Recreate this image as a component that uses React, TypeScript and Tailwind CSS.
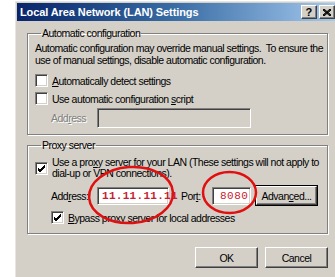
import React from "react";

const font = { fontFamily: '"Liberation Sans", Arial, sans-serif' };

function U({ children }: { children: React.ReactNode }) {
  return <span className="underline underline-offset-1">{children}</span>;
}

function CheckBox({ checked }: { checked?: boolean }) {
  return (
    <div className="w-[13px] h-[13px] shrink-0 bg-white border border-t-[#808080] border-l-[#808080] border-b-white border-r-white shadow-[inset_1px_1px_0_#404040,inset_-1px_-1px_0_#d4d0c8] flex items-center justify-center">
      {checked && (
        <svg width="9" height="9" viewBox="0 0 9 9">
          <path d="M1 4 L3 6 L8 1 M1 5 L3 7 L8 2 M1 6 L3 8 L8 3" stroke="#000" strokeWidth="1" fill="none" />
        </svg>
      )}
    </div>
  );
}

function Sunken({ className, children }: { className: string; children?: React.ReactNode }) {
  return (
    <div
      className={
        "border border-t-[#808080] border-l-[#808080] border-b-white border-r-white shadow-[inset_1px_1px_0_#404040,inset_-1px_-1px_0_#d4d0c8] flex items-center " +
        className
      }
    >
      {children}
    </div>
  );
}

function Button({ className, children }: { className: string; children: React.ReactNode }) {
  return (
    <div
      className={
        "bg-[#d4d0c8] border border-t-white border-l-white border-b-[#404040] border-r-[#404040] shadow-[inset_-1px_-1px_0_#808080] flex items-center justify-center text-black " +
        className
      }
    >
      {children}
    </div>
  );
}

function Group({ title, className, children }: { title: string; className: string; children: React.ReactNode }) {
  return (
    <fieldset
      className={
        "border border-[#808080] shadow-[1px_1px_0_#fff,inset_1px_1px_0_#fff] mx-0 px-0 overflow-hidden " + className
      }
    >
      <legend className="ml-[6px] px-[1px] leading-[12px] text-black">{title}</legend>
      {children}
    </fieldset>
  );
}

export default function App() {
  return (
    <div className="relative w-[335px] h-[277px] bg-white flex overflow-hidden" style={font}>
      <div className="ml-[15px] mt-[1px] flex-1 flex flex-col bg-[#d4d0c8] border-l border-t border-l-[#e8e6e0] border-t-[#e8e6e0]">
        {/* title bar */}
        <div className="mx-[1px] mt-[1px] h-[18px] bg-gradient-to-r from-[#0a246a] via-[#3a6ea5] to-[#a6caf0] flex items-center pl-[3px] pr-[2px]">
          <span className="text-white font-bold text-[11px] tracking-[-0.1px]">Local Area Network (LAN) Settings</span>
          <div className="ml-auto flex">
            <Button className="w-[16px] h-[14px] font-bold text-[11px]">?</Button>
            <Button className="ml-[2px] w-[16px] h-[14px]">
              <svg width="8" height="7" viewBox="0 0 8 7">
                <path d="M0 0 L8 7 M1 0 L8 6 M0 1 L7 7 M8 0 L0 7 M7 0 L0 6 M8 1 L1 7" stroke="#000" strokeWidth="1" />
              </svg>
            </Button>
          </div>
        </div>

        <div className="flex flex-col pl-[11px] pr-[10px] text-[10.5px] tracking-[-0.5px] leading-[12px] text-black">
          <Group title="Automatic configuration" className="mt-[6px] h-[108px] pl-[7px] pr-[4px]">
            <p className="mt-[3px] whitespace-nowrap leading-[12px]">
              Automatic configuration may override manual settings.&nbsp; To ensure the
              <br />
              use of manual settings, disable automatic configuration.
            </p>
            <div className="mt-[8px] flex items-center gap-[3px]">
              <CheckBox />
              <span className="ml-[1px]">
                <U>A</U>utomatically detect settings
              </span>
            </div>
            <div className="mt-[5px] flex items-center gap-[3px]">
              <CheckBox />
              <span className="ml-[1px]">
                Use automatic configuration <U>s</U>cript
              </span>
            </div>
            <div className="mt-[3px] flex items-center pl-[16px]">
              <span className="w-[46px] text-[#808080] [text-shadow:1px_1px_0_#fff]">
                Add<U>r</U>ess
              </span>
              <Sunken className="w-[154px] h-[20px] bg-[#d4d0c8]" />
            </div>
          </Group>

          <Group title="Proxy server" className="mt-[4px] h-[95px] pl-[7px] pr-[4px]">
            <div className="mt-[6px] flex items-center gap-[3px]">
              <CheckBox checked />
              <span className="ml-[1px] whitespace-nowrap leading-[11px]">
                Use a pro<U>x</U>y server for your LAN (These settings will not apply to
                <br />
                dial-up or VPN connections).
              </span>
            </div>
            <div className="mt-[7px] flex items-center pl-[16px]">
              <span className="w-[46px]">
                Add<U>r</U>ess:
              </span>
              <Sunken className="w-[72px] h-[18px] bg-white pl-[4px]">
                <span className="font-mono text-[11px] font-bold text-[#c8202e] tracking-[0.3px]">11.11.11.11</span>
              </Sunken>
              <span className="ml-[12px] w-[31px]">
                Por<U>t</U>:
              </span>
              <Sunken className="w-[39px] h-[18px] bg-white pl-[7px]">
                <span className="font-mono text-[11px] text-[#c8202e] tracking-[0.5px]">8080</span>
              </Sunken>
              <Button className="ml-[5px] w-[61px] h-[19px] outline outline-1 outline-black">
                Advan<U>c</U>ed...
              </Button>
            </div>
            <div className="mt-[6px] flex items-center gap-[3px] pl-[16px]">
              <CheckBox checked />
              <span className="ml-[1px]">
                <U>B</U>ypass proxy server for local addresses
              </span>
            </div>
          </Group>

          <div className="mt-[13px] flex justify-end gap-[7px]">
            <Button className="w-[63px] h-[21px]">OK</Button>
            <Button className="w-[63px] h-[21px]">Cancel</Button>
          </div>
        </div>
      </div>

      {/* red annotation circles */}
      <svg className="absolute left-0 top-0 pointer-events-none" width="335" height="277">
        <ellipse cx="131" cy="195" rx="42" ry="28" fill="none" stroke="#e01010" strokeWidth="2.5" transform="rotate(-4 131 195)" />
        <ellipse cx="229.5" cy="192.5" rx="26.5" ry="20.5" fill="none" stroke="#e01010" strokeWidth="2.5" />
      </svg>
    </div>
  );
}
